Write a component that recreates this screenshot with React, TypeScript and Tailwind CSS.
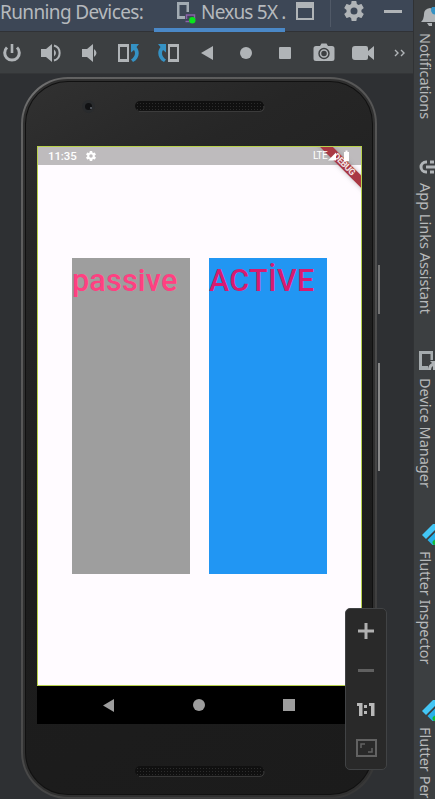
import type { ReactNode } from "react";

type IconProps = { w: number; h: number; children: ReactNode; className?: string };

function Icon({ w, h, children, className = "" }: IconProps) {
  return (
    <svg width={w} height={h} viewBox={`0 0 ${w} ${h}`} fill="none" className={`block shrink-0 ${className}`}>
      {children}
    </svg>
  );
}

const GEAR =
  "M19.4 13c.1-.3.1-.7.1-1s0-.7-.1-1l2.100-1.650c.2-.15.25-.42.12-.64l-2-3.460c-.12-.22-.39-.3-.61-.22l-2.490 1a7.300 7.300 0 0 0-1.690-.98l-.38-2.650A.49.49 0 0 0 14 2h-4c-.25 0-.46.18-.49.42l-.38 2.650c-.61.25-1.170.59-1.690.98l-2.490-1c-.23-.09-.49 0-.61.22l-2 3.460c-.13.22-.07.49.12.64L4.570 11c-.04.32-.07.65-.07 1s.03.660.07 1l-2.110 1.650c-.19.15-.24.42-.12.640l2 3.460c.12.22.39.3.61.22l2.490-1c.52.4 1.080.73 1.690.98l.38 2.650c.03.24.24.420.49.420h4c.25 0 .46-.18.49-.42l.38-2.650c.61-.25 1.170-.59 1.690-.98l2.490 1c.23.09.49 0 .61-.22l2-3.460c.12-.22.07-.49-.12-.64L19.400 13zM12 15.500a3.500 3.500 0 1 1 0-7 3.500 3.500 0 0 1 0 7z";

function Gear({ size, color }: { size: number; color: string }) {
  return (
    <svg width={size} height={size} viewBox="2 2 20 20" fill={color} className="block shrink-0">
      <path d={GEAR} />
    </svg>
  );
}

function Header() {
  return (
    <header className="flex h-[32px] shrink-0 items-start border-b border-[#303236] bg-[#3d4756] text-[#b5b9bd]">
      <span className="w-[154px] whitespace-nowrap text-[19px] leading-[25px] tracking-[-0.62px]">Running Devices:</span>
      <div className="flex h-[32px] w-[131px] items-start border-b-[4px] border-[#4a88c7] pl-[22px]">
        <Icon w={20} h={24}>
          <path d="M1 2h12v10h-2.500V5h-7v11H9v3H1z" fill="#a2abb2" />
          <path d="M10.500 19v-4h8v4M9.500 21.500h4" stroke="#8b62a8" strokeWidth="1.500" />
          <circle cx="16.300" cy="20.200" r="3.200" fill="#08e51b" />
        </Icon>
        <span className="ml-[5px] whitespace-nowrap text-[19px] leading-[25px] tracking-[-0.8px]">Nexus 5X .</span>
      </div>
      <Icon w={20} h={20} className="ml-[10px] mt-[1px]">
        <path d="M1 1h18v18H1zM3 7v10h14V7z" fill="#b0b4b7" fillRule="evenodd" />
      </Icon>
      <div className="ml-[15px] h-[27px] w-px bg-[#505967]" />
      <div className="ml-[13px] mt-[1px]">
        <Gear size={20} color="#b0b4b7" />
      </div>
      <div className="ml-[20px] mt-[10px] h-[3px] w-[18px] bg-[#b0b4b7]" />
    </header>
  );
}

function Slot({ children }: { children: ReactNode }) {
  return <div className="flex w-[39px] shrink-0 items-center justify-center">{children}</div>;
}

function RotateLeft() {
  return (
    <Icon w={22} h={20}>
      <path d="M0 1h11v18H0zM2 4v12h7V4z" fill="#b0b4b7" fillRule="evenodd" />
      <path d="M13 1h8l-2.500 3c4 5 2.500 12-3.500 15l-2-2.500c4-2.500 5-6.500 3-9.500l-3 2.500z" fill="#3592c4" />
    </Icon>
  );
}

function RotateRight() {
  return (
    <Icon w={22} h={20}>
      <path d="M11 1h11v18H11zM13 4v12h7V4z" fill="#b0b4b7" fillRule="evenodd" />
      <path d="M9 1H1l2.500 3C-.5 9 1 16 7 19l2-2.500C5 14 4 10 6 7l3 2.500z" fill="#3592c4" />
    </Icon>
  );
}

function Toolbar() {
  return (
    <div className="flex h-[42px] shrink-0 items-center overflow-hidden border-b border-[#343638] bg-[#3c3f41]">
      <div className="-ml-[8px] flex">
        <Slot>
          <Icon w={20} h={20}>
            <path d="M5 4.500a7.300 7.300 0 1 0 10 0" stroke="#b0b4b7" strokeWidth="3" />
            <path d="M10 1v9" stroke="#b0b4b7" strokeWidth="2.600" />
          </Icon>
        </Slot>
        <Slot>
          <Icon w={22} h={20}>
            <path d="M1 6h5l6-5v18l-6-5H1z" fill="#b0b4b7" />
            <path d="M14 6.500q4 3.500 0 7z" fill="#b0b4b7" />
            <path d="M14 2.500c7.500 2 7.500 13 0 15" stroke="#b0b4b7" strokeWidth="2" />
          </Icon>
        </Slot>
        <Slot>
          <Icon w={18} h={20}>
            <path d="M1 6h5l6-5v18l-6-5H1z" fill="#b0b4b7" />
            <path d="M13 6q5 4 0 8z" fill="#b0b4b7" />
          </Icon>
        </Slot>
        <Slot><RotateLeft /></Slot>
        <Slot><RotateRight /></Slot>
        <Slot>
          <Icon w={12} h={14}><path d="M12 0v14L0 7z" fill="#b0b4b7" /></Icon>
        </Slot>
        <Slot><div className="size-[12px] rounded-full bg-[#b0b4b7]" /></Slot>
        <Slot><div className="size-[12px] rounded-[1px] bg-[#b0b4b7]" /></Slot>
        <Slot>
          <Icon w={22} h={20}>
            <path d="M3 3h4l1.500-2.500h5L15 3h4q2.500 0 2.500 2.500v10q0 2.500-2.500 2.500H3q-2.500 0-2.500-2.500v-10Q.5 3 3 3zm8 1.800a5.700 5.700 0 1 0 0 11.400 5.700 5.700 0 0 0 0-11.400z" fill="#b0b4b7" fillRule="evenodd" />
            <circle cx="11" cy="10.500" r="3.500" stroke="#b0b4b7" strokeWidth="1.500" />
          </Icon>
        </Slot>
        <Slot>
          <Icon w={22} h={16}>
            <path d="M3 1h11q2 0 2 2v3l6-5v14l-6-5v3q0 2-2 2H3q-3 0-3-3V4q0-3 3-3z" fill="#b0b4b7" />
          </Icon>
        </Slot>
      </div>
      <Icon w={11} h={8} className="ml-[12px]">
        <path d="m1 1 3 3-3 3M7 1l3 3-3 3" stroke="#b0b4b7" strokeWidth="1.400" />
      </Icon>
    </div>
  );
}

function Speaker() {
  return (
    <Icon w={131} h={12}>
      <defs>
        <pattern id="mesh" width="3" height="3" patternUnits="userSpaceOnUse">
          <rect width="3" height="3" fill="#101010" />
          <rect width="1" height="1" fill="#2c2c2c" />
        </pattern>
      </defs>
      <rect x="1" y="1" width="129" height="10" rx="5" fill="url(#mesh)" />
      <path d="M5 11.400h121q4 0 4-5" stroke="#444" strokeWidth="0.800" />
    </Icon>
  );
}

function StatusBar() {
  return (
    <div className="flex h-[18px] items-center bg-[#bebbbd] pl-[10px] font-[Roboto,sans-serif] text-white">
      <span className="w-[38px] text-[11.500px] font-medium leading-[18px] tracking-[-0.1px]">11:35</span>
      <Gear size={10} color="#fff" />
      <span className="relative z-10 ml-[217px] w-[15px] text-[10px] leading-[18px] tracking-[-0.5px]">LTE</span>
      <Icon w={26} h={12} className="relative z-10">
        <path d="M0 10.500 8 2.500v8zM16 2h1.500V.500h2V2H21v9h-5z" fill="#fff" />
      </Icon>
    </div>
  );
}

function Phone() {
  return (
    <div className="ml-[21px] mt-[3px] h-[722px] w-[356px] shrink-0 rounded-[47px] bg-[linear-gradient(135deg,#8c8c8c_0%,#626262_4%,#505050_50%,#363636_100%)] p-[2px]">
      <div className="h-full rounded-[45px] border-[2px] border-[#303030] bg-[#111] p-px">
        <div className="relative flex h-full flex-col rounded-[42px] bg-[linear-gradient(150deg,#313131_0%,#262626_18%,#1d1d1d_55%,#1b1b1b_100%)] px-[11px]">
          <div className="flex h-[64px] shrink-0 items-start">
            <div className="ml-[45px] mt-[18px] flex size-[13px] items-center justify-center rounded-full bg-[#292b2d]">
              <div className="flex size-[7px] items-end justify-end rounded-full bg-[#101113] pb-[1px]"><div className="size-[2px] rounded-full bg-[#626771]" /></div>
            </div>
            <div className="ml-[39px] mt-[18px]"><Speaker /></div>
          </div>
          <main className="relative h-[540px] w-[325px] shrink-0 overflow-hidden border border-[#b8d14c] bg-[#fffbff]">
            <StatusBar />
            <div className="flex gap-[19px] pl-[34px] pt-[93px] font-[Roboto,sans-serif] text-[30.500px] font-medium leading-[45px]">
              <div className="h-[316px] w-[118px] bg-[#9e9e9e] text-[#ff4081]"><span className="block tracking-[0.2px]">passive</span></div>
              <div className="h-[316px] w-[118px] bg-[#2196f3] text-[#d81b70]"><span className="block tracking-[0.3px]">ACTİVE</span></div>
            </div>
            <div className="absolute -right-[28px] top-[13px] h-[9px] w-[90px] rotate-45 bg-[#a93843] text-center font-[Roboto,sans-serif] text-[9px] font-bold leading-[9px] tracking-[-0.4px] text-[#f4e5e6] shadow-[0_0_5px_#7777]">DEBUG</div>
          </main>
          <nav className="flex h-[38px] w-[325px] shrink-0 items-center bg-black pl-[66px]">
            <Icon w={11} h={13}><path d="M11 0v13L0 6.500z" fill="#9d9d9d" /></Icon>
            <div className="ml-[79px] size-[12px] rounded-full bg-[#9d9d9d]" />
            <div className="ml-[78px] size-[12px] bg-[#9d9d9d]" />
          </nav>
          <div className="ml-[97px] mt-[41px]"><Speaker /></div>
        </div>
      </div>
    </div>
  );
}

function ZoomPanel() {
  return (
    <div className="absolute left-[345px] top-[534px] flex h-[162px] w-[42px] flex-col items-center rounded-[5px] border-[1.500px] border-[#414345] bg-[#292929]">
      <Icon w={16} h={16} className="mt-[14px]"><path d="M8 0v16M0 8h16" stroke="#b0b0b0" strokeWidth="3" /></Icon>
      <div className="mt-[29.500px] h-[3px] w-[16px] bg-[#606060]" />
      <Icon w={18} h={13} className="mt-[31px]">
        <path d="M0 0h5.500v13h-3.500V3H0zM12 0h5.500v13h-3.500V3h-2zM7 2h3v3H7zM7 8h3v3H7z" fill="#b8b8b8" />
      </Icon>
      <Icon w={21} h={18} className="mt-[23px]">
        <path d="M1 1h19v16H1z" stroke="#626262" strokeWidth="2" />
        <path d="M5 9V5h4M12 13h4V9" stroke="#626262" strokeWidth="1.500" />
      </Icon>
    </div>
  );
}

function FlutterMark() {
  return (
    <Icon w={20} h={21}>
      <path d="M0 11 11 0h8L4 15z" fill="#43c6f5" />
      <path d="m5.500 16 8-8h7l-8 8 5 5h-7z" fill="#29b1e9" />
      <circle cx="13" cy="18.500" r="2.500" fill="#15b936" />
    </Icon>
  );
}

function Tool({ icon, label, className }: { icon: ReactNode; label: string; className: string }) {
  return (
    <div className={`flex shrink-0 flex-col items-start pl-[2px] ${className}`}>
      {icon}
      <span className="mt-[6px] whitespace-nowrap text-[14.500px] leading-[20px] text-[#b7b9ba] [writing-mode:vertical-rl]">{label}</span>
    </div>
  );
}

function Sidebar() {
  return (
    <aside className="flex w-[22px] shrink-0 flex-col overflow-hidden border-l border-[#303234] bg-[#3c3f41] pt-[7px]">
      <Tool className="h-[152px]" label="Notifications" icon={
        <Icon w={20} h={20} className="ml-[5px]">
          <path d="M0 15q3-3 3-8 0-5 6-6 6 1 6 7 0 4 3 7zM6 16h5v3H8z" fill="#b0b4b7" />
          <circle cx="14.500" cy="3" r="4.500" fill="#3592c4" />
        </Icon>
      } />
      <Tool className="h-[191px]" label="App Links Assistant" icon={
        <Icon w={20} h={18} className="ml-[3px]">
          <path d="M8 3H7a5 5 0 0 0 0 10h1M11 3h4M11 13h4M7 8h10" stroke="#b0b4b7" strokeWidth="3" />
        </Icon>
      } />
      <Tool className="h-[174px]" label="Device Manager" icon={
        <Icon w={20} h={22} className="ml-[3px]">
          <path d="M0 1h14v9h-2.500V4H3v12h6v4H0z" fill="#a5abae" />
          <path d="M9 20q0-5 4-7l-2-2h5v9h-2v-4q-2 1-2 4z" fill="#b0b4b7" />
        </Icon>
      } />
      <Tool className="h-[176px]" label="Flutter Inspector" icon={<div className="ml-[6px]"><FlutterMark /></div>} />
      <Tool className="h-[140px]" label="Flutter Per" icon={<div className="ml-[6px]"><FlutterMark /></div>} />
    </aside>
  );
}

export default function App() {
  return (
    <div className="flex h-[799px] w-[435px] overflow-hidden bg-[#303234] font-['Noto_Sans',sans-serif]">
      <div className="flex w-[413px] shrink-0 flex-col">
        <Header />
        <Toolbar />
        <section className="relative flex h-[725px] items-start overflow-hidden bg-[#2e3033]">
          <Phone />
          <div className="ml-[1px] flex flex-col pt-[191px]">
            <div className="h-[49px] w-[2px] bg-[#747474]" />
            <div className="mt-[49px] h-[108px] w-[2px] bg-[#898989]" />
          </div>
          <ZoomPanel />
        </section>
      </div>
      <Sidebar />
    </div>
  );
}
